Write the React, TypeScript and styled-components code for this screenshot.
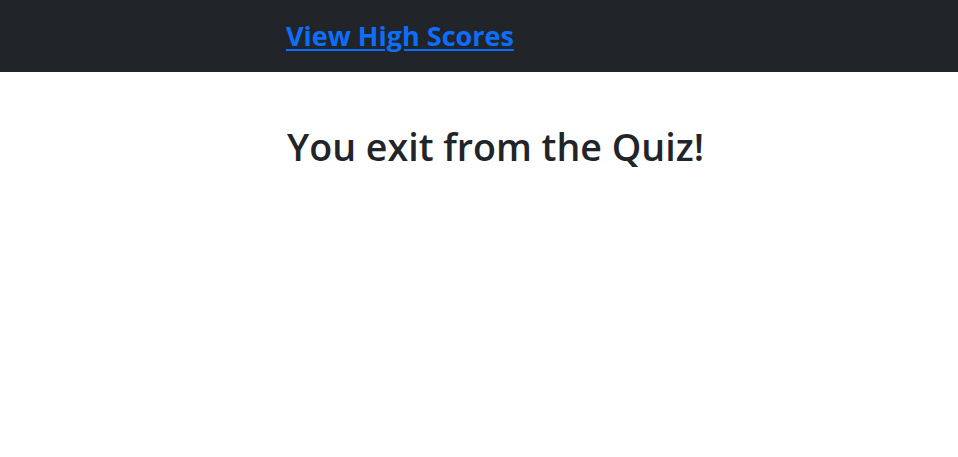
import React from "react";
import styled, { createGlobalStyle } from "styled-components";

const Global = createGlobalStyle`
  html, body { margin: 0; padding: 0; background: #fff; }
  body { font-family: "Open Sans", "Noto Sans", sans-serif; color: #212529; }
`;

const NavBar = styled.nav`
  height: 72px;
  background: #212529;
  display: flex;
  align-items: center;
  padding-left: 286px;
`;

const NavLink = styled.a`
  color: #0d6efd;
  font-weight: 700;
  font-size: 27px;
  line-height: 1.2;
  text-decoration: underline;
  text-underline-offset: 3px;
  text-decoration-thickness: 2px;
  cursor: pointer;
`;

const Main = styled.main`
  padding: 52px 0 0 287px;
`;

const Title = styled.h1`
  margin: 0;
  font-size: 37.6px;
  font-weight: 600;
  line-height: 1.2;
  color: #212529;
`;

export default function App() {
  return (
    <>
      <Global />
      <NavBar>
        <NavLink href="#">View High Scores</NavLink>
      </NavBar>
      <Main>
        <Title>You exit from the Quiz!</Title>
      </Main>
    </>
  );
}
